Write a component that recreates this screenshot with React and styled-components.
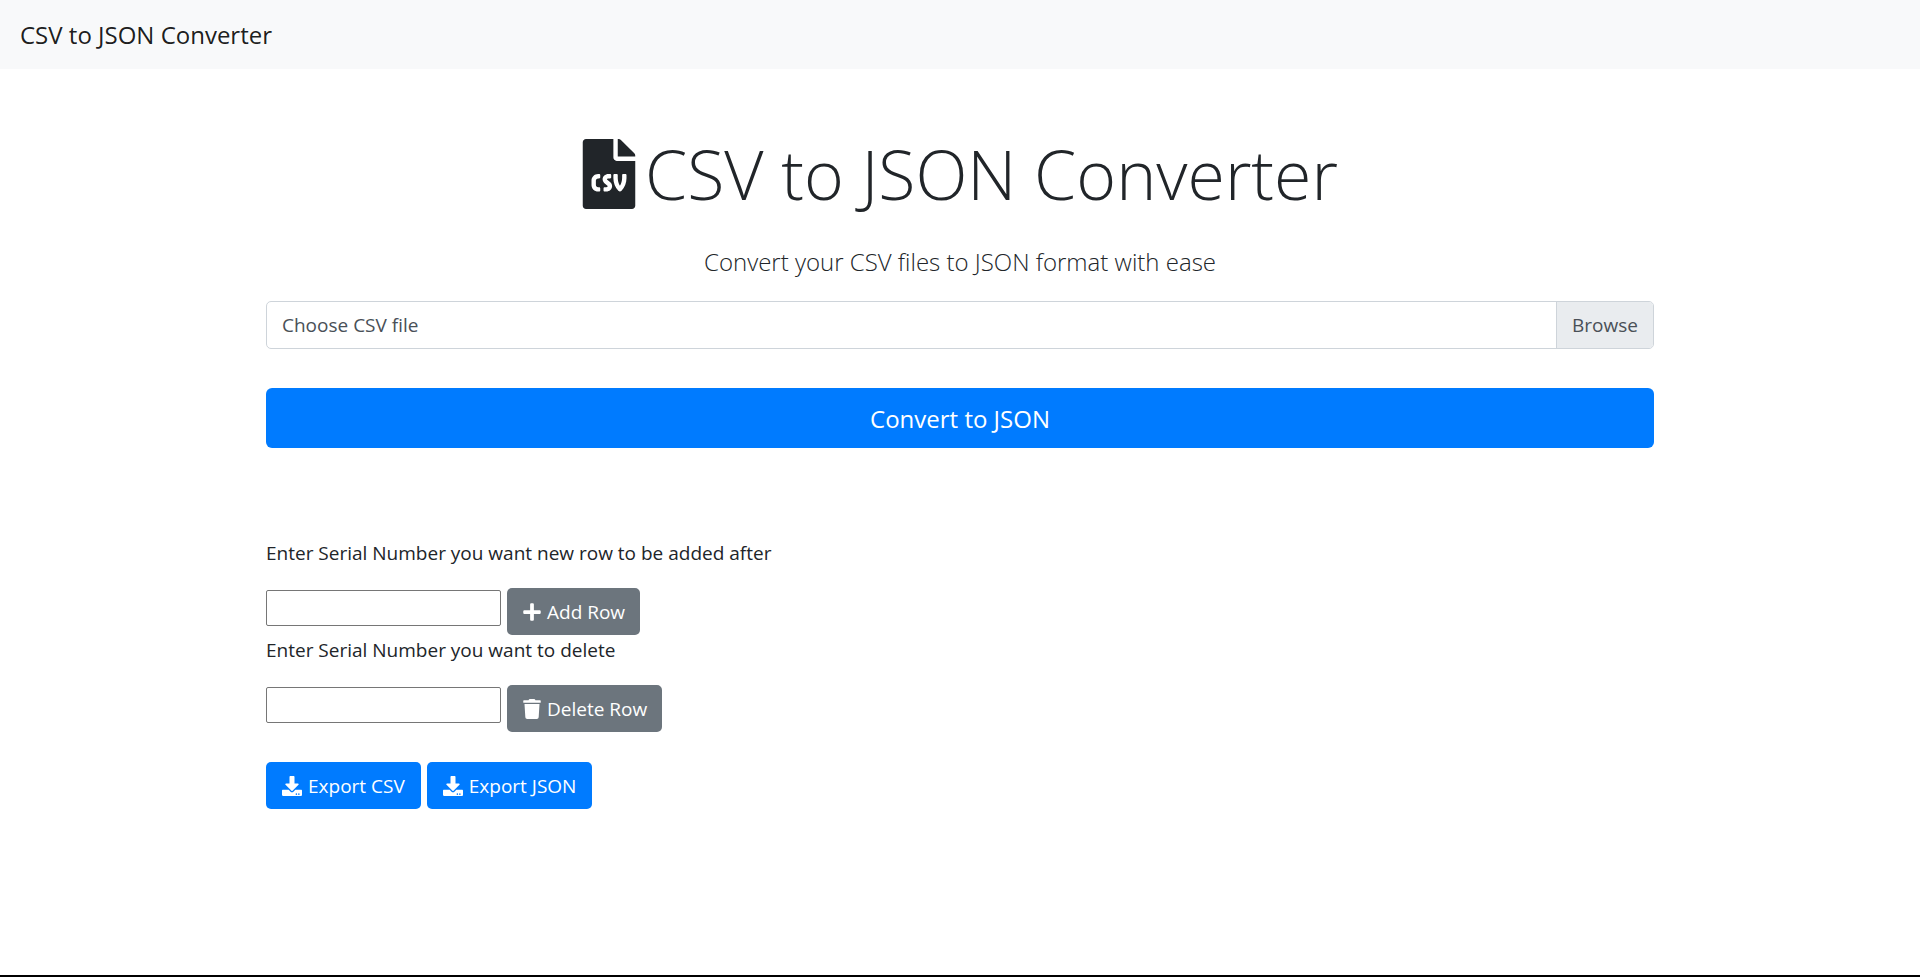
import React, { useState } from "react";
import styled, { createGlobalStyle } from "styled-components";
import { FaFileCsv, FaPlus, FaTrash, FaDownload } from "react-icons/fa";

const GlobalStyle = createGlobalStyle`
  *, *::before, *::after { box-sizing: border-box; }
  body {
    margin: 0;
    background: #fff;
    color: #212529;
    font-family: "Open Sans", "Noto Sans", sans-serif;
    font-size: 19px;
    line-height: 30px;
  }
`;

const Page = styled.div`
  display: flex;
  flex-direction: column;
  min-height: 100vh;
  border-bottom: 2px solid #000;
`;

const Navbar = styled.nav`
  display: flex;
  align-items: center;
  height: 69px;
  padding: 0 20px;
  background: #f8f9fa;
`;

const Brand = styled.a`
  color: rgba(0, 0, 0, 0.9);
  font-size: 24px;
  line-height: 38px;
  text-decoration: none;
`;

const Container = styled.main`
  width: 100%;
  max-width: 1428px;
  margin: 0 auto;
  padding: 60px 20px;
`;

const Title = styled.h1`
  display: flex;
  align-items: center;
  justify-content: center;
  gap: 9px;
  margin: 0 0 24px;
  font-size: 68px;
  font-weight: 300;
  line-height: 90px;

  svg { width: 54px; height: 70px; }
`;

const Lead = styled.p`
  margin: 0 0 20px;
  font-size: 24px;
  font-weight: 300;
  line-height: 38px;
  text-align: center;
`;

const FileField = styled.label`
  display: flex;
  height: 48px;
  margin-bottom: 39px;
  overflow: hidden;
  border: 1px solid #ced4da;
  border-radius: 5px;
  color: #495057;
  line-height: 46px;
  cursor: pointer;
`;

const HiddenFile = styled.input`
  position: absolute;
  width: 1px;
  height: 1px;
  opacity: 0;
`;

const FileName = styled.span`
  flex: 1;
  padding: 0 15px;
`;

const Browse = styled.span`
  padding: 0 15px;
  border-left: 1px solid #ced4da;
  background: #e9ecef;
`;

const Button = styled.button`
  display: inline-flex;
  align-items: center;
  justify-content: center;
  gap: ${({ $secondary }) => ($secondary ? "5px" : "6px")};
  width: ${({ $block }) => ($block ? "100%" : "auto")};
  height: ${({ $block }) => ($block ? "60px" : "47px")};
  padding: ${({ $secondary }) => ($secondary ? "0 15px" : "0 16px")};
  border: 0;
  border-radius: ${({ $block }) => ($block ? "6px" : "5px")};
  background: ${({ $secondary }) => ($secondary ? "#6c757d" : "#007bff")};
  color: #fff;
  font-family: inherit;
  font-size: ${({ $block }) => ($block ? "24px" : "19px")};
  cursor: pointer;

  svg { height: 20px; width: auto; }
`;

const Editor = styled.section`
  margin-top: 90px;
`;

const FieldLabel = styled.label`
  display: block;
  margin-bottom: 20px;
`;

const Row = styled.div`
  display: flex;
  align-items: flex-start;
  gap: 6px;
`;

const SerialInput = styled.input`
  width: 235px;
  height: 36px;
  margin: 2px 0 0;
  padding: 1px 3px;
  border: 1px solid #767676;
  border-radius: 2px;
  font: inherit;
`;

const Exports = styled(Row)`
  margin-top: 30px;
`;

export default function App() {
  const [fileName, setFileName] = useState("Choose CSV file");
  return (
    <Page>
      <GlobalStyle />
      <Navbar>
        <Brand href="#">CSV to JSON Converter</Brand>
      </Navbar>
      <Container>
        <Title>
          <FaFileCsv aria-hidden="true" />
          CSV to JSON Converter
        </Title>
        <Lead>Convert your CSV files to JSON format with ease</Lead>
        <FileField htmlFor="csv-file">
          <HiddenFile
            id="csv-file"
            type="file"
            accept=".csv"
            onChange={(e) => setFileName(e.target.files[0]?.name ?? "Choose CSV file")}
          />
          <FileName>{fileName}</FileName>
          <Browse>Browse</Browse>
        </FileField>
        <Button type="button" $block>Convert to JSON</Button>
        <Editor>
          <FieldLabel htmlFor="add-after">
            Enter Serial Number you want new row to be added after
          </FieldLabel>
          <Row>
            <SerialInput id="add-after" type="text" />
            <Button type="button" $secondary><FaPlus aria-hidden="true" />Add Row</Button>
          </Row>
          <FieldLabel htmlFor="delete-row">Enter Serial Number you want to delete</FieldLabel>
          <Row>
            <SerialInput id="delete-row" type="text" />
            <Button type="button" $secondary><FaTrash aria-hidden="true" />Delete Row</Button>
          </Row>
          <Exports>
            <Button type="button"><FaDownload aria-hidden="true" />Export CSV</Button>
            <Button type="button"><FaDownload aria-hidden="true" />Export JSON</Button>
          </Exports>
        </Editor>
      </Container>
    </Page>
  );
}
